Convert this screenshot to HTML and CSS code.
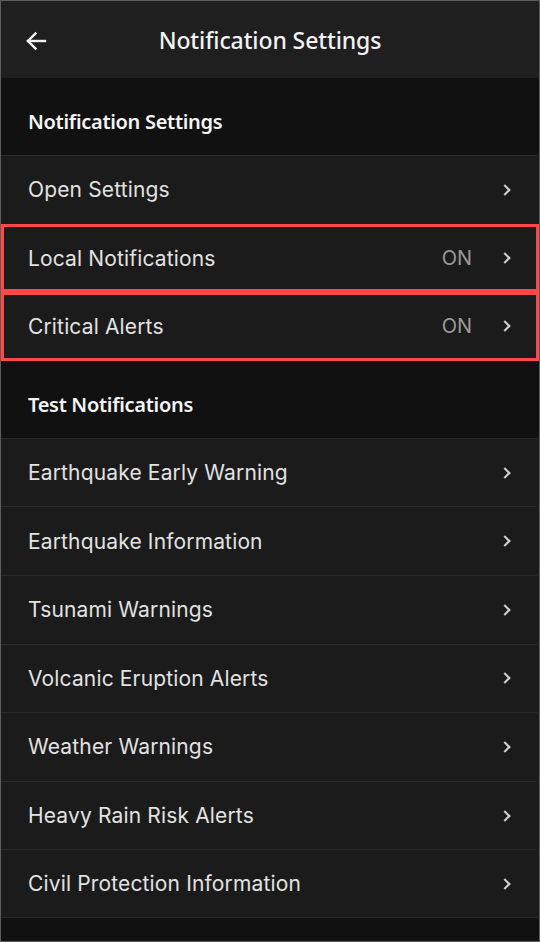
FILE: index.html
```html
<!DOCTYPE html>
<html>
<head>
<title>Notification Settings</title>
<link rel="stylesheet" href="styles.css">
</head>

<body>
  <div id="screen">
    <header class="top-bar">
      <button class="back-btn" aria-label="Back">
        <svg width="24" height="24" viewBox="0 0 24 24" fill="none" stroke="#f2f2f2" stroke-width="2.4" stroke-linecap="square">
          <path d="M21 12H4" />
          <path d="M11.5 4.5L4 12l7.5 7.5" />
        </svg>
      </button>
      <h1 class="title">Notification Settings</h1>
    </header>

    <div class="section-title">Notification Settings</div>
    <ul class="list">
      <li class="row"><span class="label">Open Settings</span><span class="chevron"></span></li>
      <li class="row marked"><span class="label">Local Notifications</span><span class="value">ON</span><span class="chevron"></span></li>
      <li class="row marked"><span class="label">Critical Alerts</span><span class="value">ON</span><span class="chevron"></span></li>
    </ul>

    <div class="section-title">Test Notifications</div>
    <ul class="list">
      <li class="row"><span class="label">Earthquake Early Warning</span><span class="chevron"></span></li>
      <li class="row"><span class="label">Earthquake Information</span><span class="chevron"></span></li>
      <li class="row"><span class="label">Tsunami Warnings</span><span class="chevron"></span></li>
      <li class="row"><span class="label">Volcanic Eruption Alerts</span><span class="chevron"></span></li>
      <li class="row"><span class="label">Weather Warnings</span><span class="chevron"></span></li>
      <li class="row"><span class="label">Heavy Rain Risk Alerts</span><span class="chevron"></span></li>
      <li class="row"><span class="label">Civil Protection Information</span><span class="chevron"></span></li>
    </ul>
  </div>
</body>
</html>
```

FILE: styles.css
```css
body {
  margin: 0;
  background-color: #111111;
  font-family: Inter, "Noto Sans", sans-serif;
}

#screen {
  height: 942px;
  box-sizing: border-box;
  border: 1px solid #5c5c5c;
  background-color: #111111;
  overflow: hidden;
}

.top-bar {
  position: relative;
  height: 77px;
  background-color: #1f1f1f;
  display: flex;
  align-items: center;
  justify-content: center;
}

.back-btn {
  position: absolute;
  left: 23px;
  top: 28px;
  padding: 0;
  border: none;
  background: none;
  width: 24px;
  height: 24px;
}

.title {
  margin: 0;
  color: #f2f2f2;
  font-family: "Noto Sans", sans-serif;
  font-size: 23px;
  font-weight: 500;
  letter-spacing: -0.1px;
}

.section-title {
  height: 77px;
  box-sizing: border-box;
  padding: 10px 0 0 27px;
  display: flex;
  align-items: center;
  color: #f4f4f4;
  font-family: "Noto Sans", sans-serif;
  font-size: 20px;
  font-weight: 600;
  letter-spacing: -0.3px;
}

.list {
  list-style: none;
  margin: 0;
  padding: 0;
}

.row {
  height: 68.6px;
  box-sizing: border-box;
  border-top: 1px solid #2a2a2a;
  background-color: #1b1b1b;
  display: flex;
  align-items: center;
  padding: 0 28px 0 27px;
  color: #e2e2e2;
  font-size: 21px;
  letter-spacing: 0.15px;
}

.row:last-child {
  border-bottom: 1px solid #2a2a2a;
}

.row.marked {
  outline: 3px solid #ff4848;
  outline-offset: -3px;
}

.label {
  flex: 1;
}

.value {
  color: #9a9a9a;
  font-size: 20px;
  letter-spacing: 0;
  margin-right: 29px;
}

.chevron {
  width: 6px;
  height: 6px;
  border-top: 2px solid #d0d0d0;
  border-right: 2px solid #d0d0d0;
  transform: rotate(45deg);
  margin-right: 2px;
}
```
